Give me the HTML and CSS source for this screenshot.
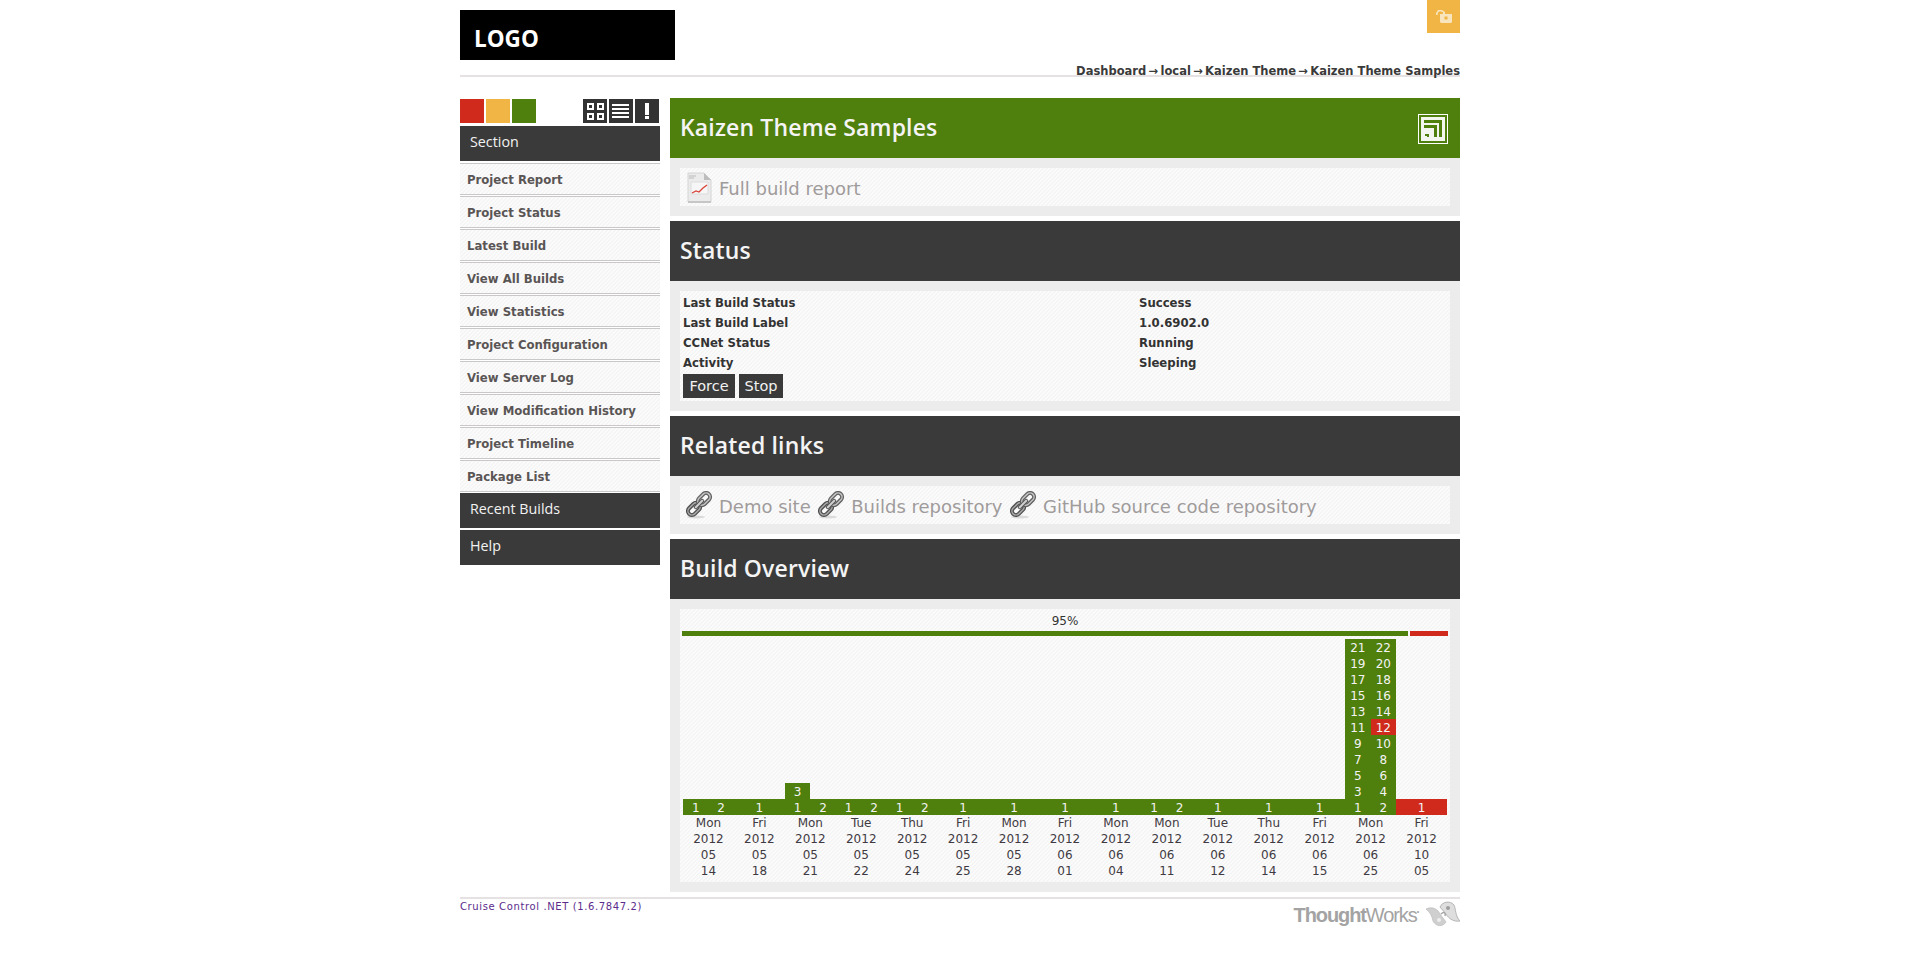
FILE: index.html

```html
<!DOCTYPE html>
<html lang="en">
<head>
    <meta charset="UTF-8">
    <title>Kaizen Theme Samples</title>
    <link rel="stylesheet" href="styles.css">
</head>
<body>
    <div class="page">
        <div class="header">
            <div class="logo">LOGO</div>
            <div class="header-right">
                <div class="lock">
                    <svg width="16" height="13" viewBox="0 0 16 13"><path d="M0 5V3L2 0H6L9 2V4H7V2.500L5.500 1.500H3L1.700 3V5Z" fill="#f9e5bd"/><path d="M4 4H16V12L15 13H5L4 12Z" fill="#f9e5bd"/><rect x="8.500" y="6.500" width="3" height="3" fill="#f0b544"/></svg>
                </div>
                <div class="breadcrumb">Dashboard<span class="arrow">&#8594;</span>local<span class="arrow">&#8594;</span>Kaizen Theme<span class="arrow">&#8594;</span>Kaizen Theme Samples</div>
            </div>
        </div>

        <div class="content">
            <div class="sidebar">
                <div class="toolbar">
                    <div class="swatches">
                        <div class="swatch red"></div>
                        <div class="swatch orange"></div>
                        <div class="swatch green"></div>
                    </div>
                    <div class="tools">
                        <div class="tool">
                            <svg width="24" height="24" viewBox="0 0 24 24" shape-rendering="crispEdges"><path fill-rule="evenodd" fill="#fff" d="M4 4h7v7H4zM6 6v3h3V6zM14 4h7v7h-7zM16 6v3h3V6zM4 14h7v7H4zM6 16v3h3v-3zM14 14h7v7h-7zM16 16v3h3v-3z"/></svg>
                        </div>
                        <div class="tool">
                            <svg width="24" height="24" viewBox="0 0 24 24" shape-rendering="crispEdges"><path fill="#fff" d="M3 5h17v2H3zM3 9h17v2H3zM3 13h17v2H3zM3 17h17v2H3z"/></svg>
                        </div>
                        <div class="tool">
                            <svg width="24" height="24" viewBox="0 0 24 24" shape-rendering="crispEdges"><path fill="#fff" d="M10 4h4v12h-4zM10 17h4v3h-4z"/></svg>
                        </div>
                    </div>
                </div>
                <div class="side-head">Section</div>
                <ul class="side-menu">
                    <li>Project Report</li>
                    <li>Project Status</li>
                    <li>Latest Build</li>
                    <li>View All Builds</li>
                    <li>View Statistics</li>
                    <li>Project Configuration</li>
                    <li>View Server Log</li>
                    <li>View Modification History</li>
                    <li>Project Timeline</li>
                    <li>Package List</li>
                </ul>
                <div class="side-head recent">Recent Builds</div>
                <div class="side-head help">Help</div>
            </div>

            <div class="main">
                <div class="section-title green-title">
                    <span>Kaizen Theme Samples</span>
                    <div class="rss">
                        <svg width="30" height="30" viewBox="0 0 30 30" shape-rendering="crispEdges"><path fill="none" stroke="#fff" d="M.5.500h29v29H.5z"/><rect x="3" y="3" width="24" height="24" fill="#f3f6ef"/><path fill="#4f7f0c" d="M6 6h18v17h-3V9H6zM6 11h13v12h-3V14H6zM7 20h4v3H9v-1H7z"/></svg>
                    </div>
                </div>
                <div class="panel">
                    <div class="inner link-row">
                        <span class="link">
                            <svg width="28" height="33" viewBox="-1 0 28 33"><path d="M2 2H18L25 9V31H2Z" fill="#ebebeb" stroke="#d4d4d4"/><path d="M18 2L25 9H18Z" fill="#bdbdbd"/><path d="M5 11h17v12H5z" fill="#f6f6f6" stroke="#dcdcdc"/><path d="M6 22L10 20L13 21L17 17L21 14" fill="none" stroke="#d9443a" stroke-width="1.300"/><path d="M3 5h7M3 7h5" stroke="#bbb"/><path d="M2 30h23v2H2z" fill="#c6c6c6"/></svg>
                            Full build report
                        </span>
                    </div>
                </div>

                <div class="section-title">Status</div>
                <div class="panel">
                    <div class="inner status">
                        <table class="status-table">
                            <tr><td>Last Build Status</td><td>Success</td></tr>
                            <tr><td>Last Build Label</td><td>1.0.6902.0</td></tr>
                            <tr><td>CCNet Status</td><td>Running</td></tr>
                            <tr><td>Activity</td><td>Sleeping</td></tr>
                        </table>
                        <div class="buttons">
                            <button class="btn force">Force</button>
                            <button class="btn stop">Stop</button>
                        </div>
                    </div>
                </div>

                <div class="section-title">Related links</div>
                <div class="panel">
                    <div class="inner link-row">
                        <span class="link">
                            <svg width="28" height="28" viewBox="0 0 28 28"><use href="#chain"/></svg>
                            Demo site
                        </span>
                        <span class="link">
                            <svg width="28" height="28" viewBox="0 0 28 28"><use href="#chain"/></svg>
                            Builds repository
                        </span>
                        <span class="link">
                            <svg width="28" height="28" viewBox="0 0 28 28"><use href="#chain"/></svg>
                            GitHub source code repository
                        </span>
                    </div>
                </div>

                <div class="section-title">Build Overview</div>
                <div class="panel">
                    <div class="inner overview">
                        <div class="percent">95%</div>
                        <div class="ratio">
                            <div class="ratio-ok"></div>
                            <div class="ratio-bad"></div>
                        </div>
                        <div class="chart" id="chart"></div>
                    </div>
                </div>
            </div>
        </div>

        <div class="footer">
            <span class="version">Cruise Control .NET (1.6.7847.2)</span>
            <div class="thoughtworks">
                <span class="tw-text"><b>Thought</b>Works<sup>&#8226;</sup></span>
                <svg width="34" height="26" viewBox="0 0 34 26"><path d="M0 8C6 5 12 8 14 13L20 21C17 26 10 26 7 20C6 15 4 11 0 8Z" fill="#cfcfcf" stroke="#bcbcbc" stroke-width=".7"/><path d="M34 20C28 21 23 18 20 13L14 6C16 1 24 -1 28 4C30 8 29 15 34 20Z" fill="#dedede" stroke="#b5b5b5"/><circle cx="22" cy="7" r="2" fill="#9d9d9d"/><circle cx="13" cy="19" r="2" fill="#eee"/><path d="M15 13C18 10 20 12 19 15" fill="none" stroke="#a5a5a5" stroke-width="1.500"/></svg>
            </div>
        </div>
    </div>

    <svg class="defs" width="0" height="0">
        <defs>
            <g id="chain">
                <ellipse cx="11" cy="26" rx="9" ry="1.500" fill="#dadada"/>
                <g fill="none" transform="translate(1 0) rotate(-45 13 13)">
                    <rect x="-1" y="9" width="14" height="8" rx="4" stroke="#4c4c4c" stroke-width="4"/>
                    <rect x="-1" y="9" width="14" height="8" rx="4" stroke="#a8a8a8" stroke-width="1.500"/>
                    <rect x="13" y="9" width="14" height="8" rx="4" stroke="#5e5e5e" stroke-width="4"/>
                    <rect x="13" y="9" width="14" height="8" rx="4" stroke="#c4c4c4" stroke-width="1.500"/>
                    <rect x="7" y="11.500" width="12" height="3" rx="1.500" fill="#d0d0d0" stroke="#555"/>
                </g>
            </g>
        </defs>
    </svg>

    <script src="chart.js"></script>
</body>
</html>
```

FILE: styles.css

```css
html, body {
    margin: 0;
    padding: 0;
    background: #fff;
}

body {
    font-family: 'DejaVu Sans', Verdana, sans-serif;
    font-size: 12px;
    color: #333;
}

.page {
    width: 1000px;
    margin: 0 auto;
}

.header {
    height: 77px;
    border-bottom: 2px solid #e6e2e4;
    box-sizing: border-box;
    display: flex;
    justify-content: space-between;
}

.logo {
    width: 215px;
    height: 50px;
    margin-top: 10px;
    box-sizing: border-box;
    padding: 12px 0 0 14px;
    background: #000;
    color: #fff;
    font-family: 'Open Sans', sans-serif;
    font-weight: 700;
    font-size: 22.500px;
    line-height: 34px;
}

.header-right {
    display: flex;
    flex-direction: column;
    align-items: flex-end;
    justify-content: space-between;
}

.lock {
    width: 33px;
    height: 33px;
    background: #f0b544;
    display: flex;
    align-items: center;
    justify-content: center;
}

.breadcrumb {
    font-weight: bold;
    font-size: 11.500px;
    line-height: 14px;
    margin-bottom: -3px;
    color: #3a3a3a;
}

.arrow {
    margin: 0 2.300px;
}

.content {
    display: flex;
    gap: 10px;
    margin-top: 21px;
}

/* left column */
.sidebar {
    width: 200px;
    flex: none;
}

.toolbar {
    height: 24px;
    margin-top: 1px;
    margin-bottom: 3px;
    display: flex;
    justify-content: space-between;
}

.swatches, .tools {
    display: flex;
    gap: 2px;
}

.tools {
    margin-right: 1px;
}

.swatch {
    width: 24px;
    height: 24px;
}

.red { background: #cf2a1b; }
.orange { background: #f0b544; }
.green { background: #4f7f0c; }

.tool {
    width: 24px;
    height: 24px;
    background: #333;
}

.tool svg {
    display: block;
}

.side-head {
    height: 35px;
    box-sizing: border-box;
    padding: 0 0 5px 10px;
    display: flex;
    align-items: center;
    background: #3a3a3a;
    color: #f2f2f2;
    font-family: 'Open Sans', sans-serif;
    font-size: 14.300px;
}

.side-menu {
    list-style: none;
    margin: 2px 0 0;
    padding: 0;
}

.side-menu li {
    height: 32px;
    box-sizing: border-box;
    margin-bottom: 1px;
    padding: 2px 0 0 7px;
    line-height: 28px;
    border-top: 1px solid #c9c7c7;
    border-bottom: 1px solid #c9c7c7;
    background: linear-gradient(135deg, #fbfbfb 25%, #f5f5f5 25%, #f5f5f5 50%, #fbfbfb 50%, #fbfbfb 75%, #f5f5f5 75%);
    background-size: 4px 4px;
    color: #5a5555;
    font-weight: bold;
    font-size: 11.700px;
}

.recent {
    margin-bottom: 2px;
}

/* right column */
.main {
    width: 790px;
    flex: none;
}

.section-title {
    height: 60px;
    box-sizing: border-box;
    padding: 0 0 2px 10px;
    display: flex;
    align-items: center;
    background: #3a3a3a;
    color: #f4f4f4;
    font-family: 'Open Sans', sans-serif;
    font-weight: 600;
    font-size: 23px;
    letter-spacing: 0.150px;
}

.green-title {
    background: #4f7f0c;
    justify-content: space-between;
    padding-right: 12px;
}

.rss {
    height: 30px;
    margin-top: 4px;
}

.rss svg {
    display: block;
}

.panel {
    background: #ececec;
    padding: 10px;
    margin-bottom: 5px;
}

.inner {
    background: linear-gradient(135deg, #fbfbfb 25%, #f5f5f5 25%, #f5f5f5 50%, #fbfbfb 50%, #fbfbfb 75%, #f5f5f5 75%);
    background-size: 4px 4px;
}

.link-row {
    height: 38px;
    display: flex;
    align-items: center;
    padding-left: 5px;
    gap: 6.500px;
}

.link {
    display: flex;
    align-items: center;
    gap: 6px;
    color: #a09b9b;
    font-size: 18px;
    padding-top: 2px;
}

.link svg {
    margin-top: -2px;
}

.status {
    height: 110px;
    padding: 2px 0 0 3px;
    box-sizing: border-box;
}

.status-table {
    width: 765px;
    border-collapse: collapse;
    font-weight: bold;
    font-size: 11.700px;
    color: #333;
}

.status-table td {
    padding: 0;
    height: 20px;
}

.status-table td:first-child {
    width: 456px;
}

.buttons {
    display: flex;
    gap: 4px;
    margin-top: 1px;
}

.btn {
    height: 24px;
    padding: 0;
    border: none;
    background: #3a3a3a;
    color: #f2f2f2;
    font-family: 'DejaVu Sans', sans-serif;
    font-size: 14.500px;
}

.force { width: 52px; }
.stop { width: 44px; }

.overview {
    height: 273px;
    box-sizing: border-box;
    padding-top: 4px;
}

.percent {
    text-align: center;
    font-size: 12px;
    line-height: 16px;
    color: #333;
    height: 18px;
}

.ratio {
    display: flex;
    gap: 2px;
    margin-left: 2px;
    height: 5px;
}

.ratio-ok {
    width: 726px;
    background: #4f7f0c;
}

.ratio-bad {
    width: 38px;
    background: #cf2a1b;
}

.chart {
    display: grid;
    grid-template-columns: repeat(15, 1fr);
    width: 764px;
    margin: 3px 0 0 3px;
    height: 240px;
    align-items: end;
    text-align: center;
    line-height: 16px;
    font-size: 12px;
}

.bars {
    display: flex;
    flex-wrap: wrap-reverse;
    color: #f4f4f4;
}

.bar-cell {
    flex: 0 0 50%;
    box-sizing: border-box;
    height: 16px;
    padding-top: 1px;
    background: #4f7f0c;
}

.bar-cell.fail {
    background: #cf2a1b;
}

.col-label {
    color: #3f3a42;
}

.footer {
    border-top: 2px solid #e6e2e4;
    display: flex;
    justify-content: space-between;
    height: 40px;
}

.version {
    font-size: 10px;
    line-height: 16px;
    color: #5b2c8c;
    letter-spacing: 0.620px;
}

.thoughtworks {
    display: flex;
    align-items: flex-start;
    gap: 8px;
    color: #a3a3a3;
}

.thoughtworks svg {
    margin-top: 2px;
}

.tw-text {
    font-family: 'Liberation Sans', sans-serif;
    font-size: 20px;
    letter-spacing: -1.100px;
    line-height: 24px;
    margin-top: 4px;
}

.tw-text sup {
    font-size: 7px;
    vertical-align: 8px;
    line-height: 0;
}

.defs {
    position: absolute;
}
```

FILE: chart.js

```js
// builds per day, numbered from the bottom row up. fail = numbers of the broken builds
var days = [
    { name: "Mon", month: "05", day: "14", builds: 2 },
    { name: "Fri", month: "05", day: "18", builds: 1 },
    { name: "Mon", month: "05", day: "21", builds: 3 },
    { name: "Tue", month: "05", day: "22", builds: 2 },
    { name: "Thu", month: "05", day: "24", builds: 2 },
    { name: "Fri", month: "05", day: "25", builds: 1 },
    { name: "Mon", month: "05", day: "28", builds: 1 },
    { name: "Fri", month: "06", day: "01", builds: 1 },
    { name: "Mon", month: "06", day: "04", builds: 1 },
    { name: "Mon", month: "06", day: "11", builds: 2 },
    { name: "Tue", month: "06", day: "12", builds: 1 },
    { name: "Thu", month: "06", day: "14", builds: 1 },
    { name: "Fri", month: "06", day: "15", builds: 1 },
    { name: "Mon", month: "06", day: "25", builds: 22, fail: [12] },
    { name: "Fri", month: "10", day: "05", builds: 1, fail: [1] }
];

var chart = document.getElementById("chart");

days.forEach(function (d) {
    var col = document.createElement("div");
    var bars = document.createElement("div");
    bars.className = "bars";

    for (var i = 1; i <= d.builds; i++) {
        var cell = document.createElement("div");
        cell.className = "bar-cell";
        if (d.fail && d.fail.indexOf(i) >= 0) cell.className += " fail";
        if (d.builds == 1) cell.style.flexBasis = "100%";
        cell.textContent = i;
        bars.appendChild(cell);
    }

    var label = document.createElement("div");
    label.className = "col-label";
    label.innerHTML = d.name + "<br>2012<br>" + d.month + "<br>" + d.day;

    col.appendChild(bars);
    col.appendChild(label);
    chart.appendChild(col);
});
```
